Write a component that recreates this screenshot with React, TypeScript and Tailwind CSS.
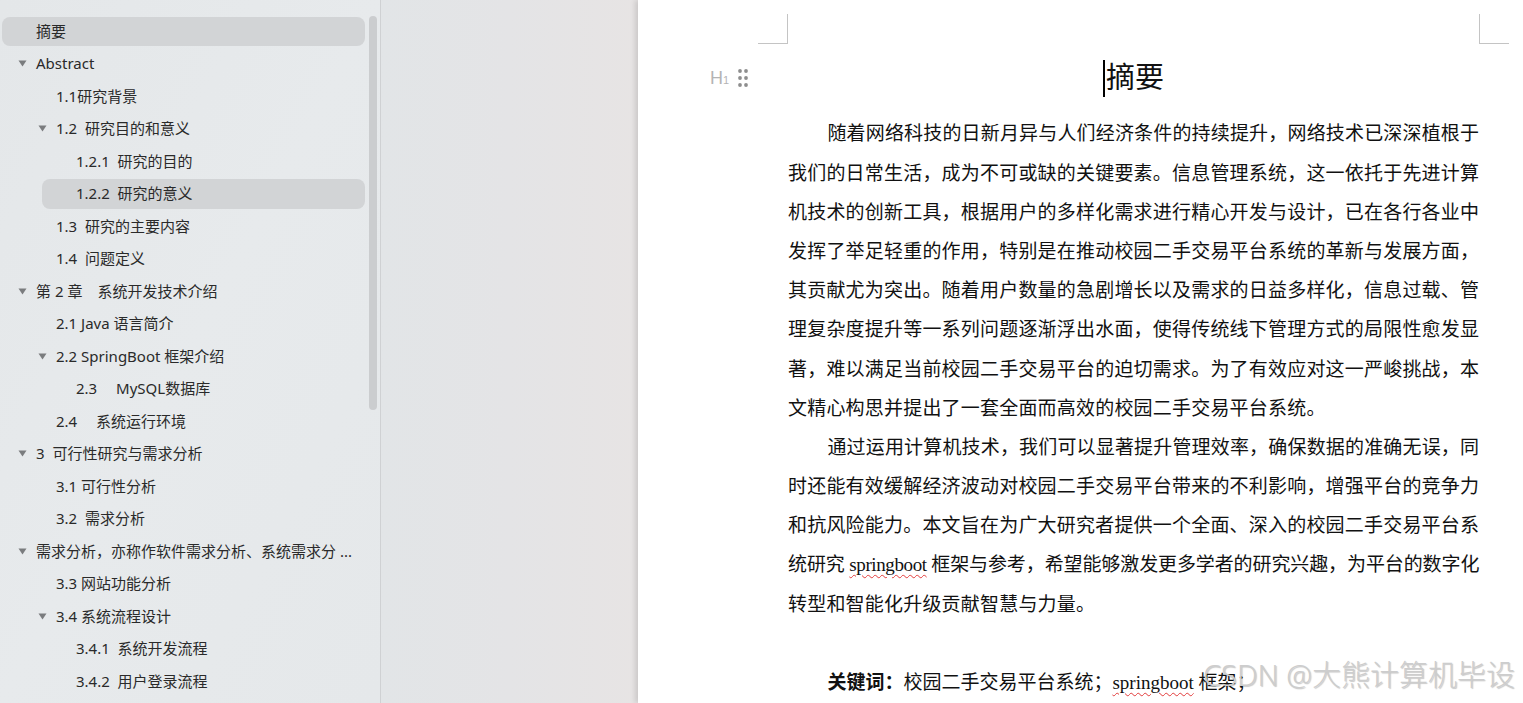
import React from "react";

type TocItem = {
  text: string;
  level: 1 | 2 | 3;
  arrow?: boolean;
  active?: boolean;
};

const toc: TocItem[] = [
  { text: "摘要", level: 1, active: true },
  { text: "Abstract", level: 1, arrow: true },
  { text: "1.1研究背景", level: 2 },
  { text: "1.2  研究目的和意义", level: 2, arrow: true },
  { text: "1.2.1  研究的目的", level: 3 },
  { text: "1.2.2  研究的意义", level: 3, active: true },
  { text: "1.3  研究的主要内容", level: 2 },
  { text: "1.4  问题定义", level: 2 },
  { text: "第 2 章　系统开发技术介绍", level: 1, arrow: true },
  { text: "2.1 Java 语言简介", level: 2 },
  { text: "2.2 SpringBoot 框架介绍", level: 2, arrow: true },
  { text: "2.3　 MySQL数据库", level: 3 },
  { text: "2.4　 系统运行环境", level: 2 },
  { text: "3  可行性研究与需求分析", level: 1, arrow: true },
  { text: "3.1 可行性分析", level: 2 },
  { text: "3.2  需求分析", level: 2 },
  { text: "需求分析，亦称作软件需求分析、系统需求分 ...", level: 1, arrow: true },
  { text: "3.3 网站功能分析", level: 2 },
  { text: "3.4 系统流程设计", level: 2, arrow: true },
  { text: "3.4.1  系统开发流程", level: 3 },
  { text: "3.4.2  用户登录流程", level: 3 },
];

const indentClass: Record<number, string> = {
  1: "ml-[2px]",
  2: "ml-[22px]",
  3: "ml-[42px]",
};

function Caret() {
  return (
    <svg width="9" height="7" viewBox="0 0 9 7" className="block">
      <path d="M0.5 0.5 H8.5 L4.5 6.5 Z" fill="#7a7c7e" />
    </svg>
  );
}

function Sidebar() {
  return (
    <aside className="relative w-[381px] shrink-0 h-full bg-gradient-to-br from-[#e4e7e9] via-[#e7eaec] to-[#e5e8ea] border-r border-[#cfd1d3]">
      <div className="pt-[15px] pr-[15px]">
        {toc.map((item, i) => (
          <div key={i} className="h-[32.5px] py-[1.5px]">
            <div
              className={`h-full ${indentClass[item.level]} rounded-[8px] flex items-center relative ${
                item.active ? "bg-[#d2d4d6]" : ""
              }`}
            >
              <div className="w-[34px] shrink-0 flex justify-center pl-[7px]">
                {item.arrow ? <Caret /> : null}
              </div>
              <span className="text-[15px] text-[#2a2a2a] whitespace-pre leading-none font-['Noto_Sans','Noto_Sans_CJK_SC',sans-serif]">
                {item.text}
              </span>
            </div>
          </div>
        ))}
      </div>
      {/* scrollbar thumb */}
      <div className="absolute left-[369px] top-[16px] w-[8px] h-[394px] rounded-full bg-[#cbcdcf]" />
    </aside>
  );
}

const para1 = [
  "随着网络科技的日新月异与人们经济条件的持续提升，网络技术已深深植根于",
  "我们的日常生活，成为不可或缺的关键要素。信息管理系统，这一依托于先进计算",
  "机技术的创新工具，根据用户的多样化需求进行精心开发与设计，已在各行各业中",
  "发挥了举足轻重的作用，特别是在推动校园二手交易平台系统的革新与发展方面，",
  "其贡献尤为突出。随着用户数量的急剧增长以及需求的日益多样化，信息过载、管",
  "理复杂度提升等一系列问题逐渐浮出水面，使得传统线下管理方式的局限性愈发显",
  "著，难以满足当前校园二手交易平台的迫切需求。为了有效应对这一严峻挑战，本",
  "文精心构思并提出了一套全面而高效的校园二手交易平台系统。",
];

const para2 = [
  "通过运用计算机技术，我们可以显著提升管理效率，确保数据的准确无误，同",
  "时还能有效缓解经济波动对校园二手交易平台带来的不利影响，增强平台的竞争力",
  "和抗风险能力。本文旨在为广大研究者提供一个全面、深入的校园二手交易平台系",
  "SPRING",
  "转型和智能化升级贡献智慧与力量。",
];

function Spell({ children }: { children: React.ReactNode }) {
  return (
    <span className="underline decoration-wavy decoration-[#e23b3b] decoration-1 underline-offset-[3px]">
      {children}
    </span>
  );
}

function Line({
  children,
  indent,
  last,
  tight,
}: {
  children: React.ReactNode;
  indent?: boolean;
  last?: boolean;
  tight?: boolean;
}) {
  return (
    <div
      className={`h-[39.2px] leading-[39.2px] whitespace-nowrap ${
        indent ? "pl-[39.4px]" : ""
      } ${tight ? "tracking-[-0.4px]" : ""} ${
        last
          ? "text-left tracking-[0.2px]"
          : "text-justify [text-align-last:justify] [text-justify:inter-character]"
      }`}
    >
      {children}
    </div>
  );
}

function Paragraph({ lines }: { lines: string[] }) {
  return (
    <>
      {lines.map((l, i) => (
        <Line
          key={i}
          indent={i === 0}
          last={i === lines.length - 1}
          tight={l === "SPRING"}
        >
          {l === "SPRING" ? (
            <>
              统研究 <Spell>springboot</Spell> 框架与参考，希望能够激发更多学者的研究兴趣，为平台的数字化
            </>
          ) : (
            l
          )}
        </Line>
      ))}
    </>
  );
}

function Page() {
  return (
    <div className="relative flex-1 h-full bg-white shadow-[-3px_0_5px_rgba(0,0,0,0.12)] overflow-hidden">
      <div className="pl-[120px] pt-[14px]">
        {/* margin corner marks */}
        <div className="flex">
          <div className="w-[30px] h-[30px] border-r border-b border-[#c4c4c4]" />
          <div className="w-[691px]" />
          <div className="w-[30px] h-[30px] border-l border-b border-[#c4c4c4]" />
        </div>

        <div className="ml-[30px] w-[691px] text-[19px] text-[#111] font-['Liberation_Serif','Noto_Sans_CJK_SC',serif]">
          {/* heading */}
          <div className="relative mt-[12px] h-[44px] flex items-center justify-center">
            <div className="absolute left-[-78px] top-0 h-full flex items-center gap-[9px]">
              <span className="text-[#b4b4b4] text-[18px] leading-none font-light font-['Liberation_Sans',sans-serif]">
                H<span className="text-[11px]">1</span>
              </span>
              <svg width="10" height="18" viewBox="0 0 10 18">
                {[2, 9, 16].map((y) =>
                  [2, 8].map((x) => (
                    <circle key={`${x}-${y}`} cx={x} cy={y} r="1.9" fill="#8e8e8e" />
                  ))
                )}
              </svg>
            </div>
            <div className="flex items-center">
              <span className="w-[2px] h-[37px] bg-black mr-[1px]" />
              <span className="text-[29px] leading-none font-normal">摘要</span>
            </div>
          </div>

          <div className="mt-[14.4px]">
            <Paragraph lines={para1} />
            <Paragraph lines={para2} />
            <div className="h-[39.2px]" />
            <div className="h-[39.2px] leading-[39.2px] pl-[39.4px] whitespace-nowrap">
              <span className="font-bold">关键词：</span>校园二手交易平台系统；<Spell>springboot</Spell> 框架；
            </div>
          </div>
        </div>
      </div>

      {/* watermark */}
      <div className="absolute right-[8px] bottom-[14px] text-[29px] leading-none font-light text-[#cdcdcd] [text-shadow:1px_1px_1px_rgba(0,0,0,0.22)] font-['Noto_Sans','Noto_Sans_CJK_SC',sans-serif] whitespace-nowrap pointer-events-none">
        CSDN @大熊计算机毕设
      </div>
    </div>
  );
}

export default function App() {
  return (
    <div className="w-[1523px] h-[703px] flex overflow-hidden bg-white">
      <Sidebar />
      <div className="w-[257px] shrink-0 h-full bg-gradient-to-r from-[#e2e5e7] via-[#e4e4e6] to-[#e7e4e4]" />
      <Page />
    </div>
  );
}
